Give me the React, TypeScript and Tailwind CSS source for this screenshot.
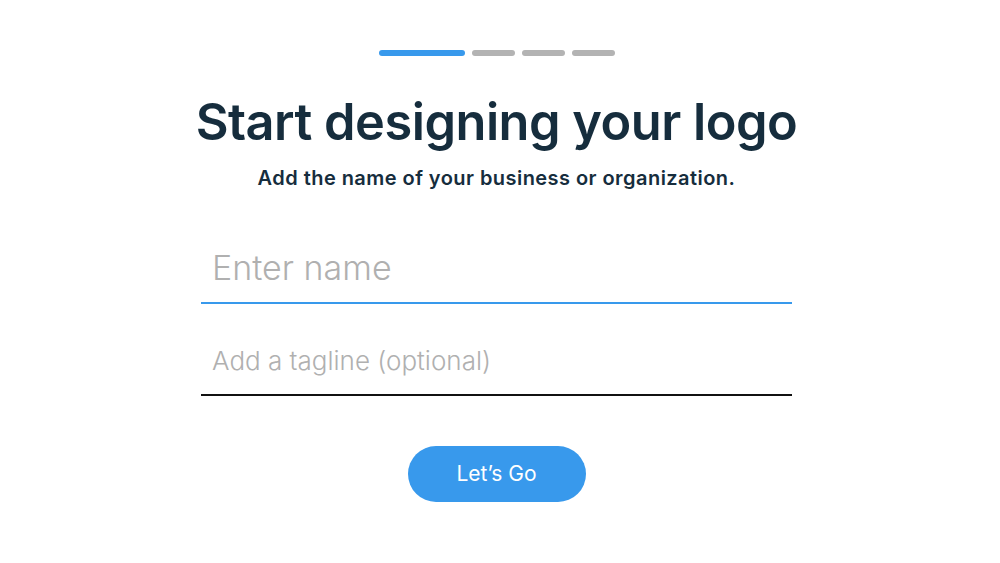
import { useState } from "react";

const STEPS = [true, false, false, false];

export default function App() {
  const [name, setName] = useState("");
  const [tagline, setTagline] = useState("");

  return (
    <div className="min-h-[563px] w-full bg-white flex flex-col items-center pr-[7px] font-['Inter',sans-serif]">
      {/* Step indicator */}
      <div className="mt-[50px] flex gap-[7px]">
        {STEPS.map((active, i) => (
          <div
            key={i}
            className={`h-[6px] rounded-full ${active ? "w-[86px] bg-[#3899ec]" : "w-[43px] bg-[#b3b3b3]"}`}
          />
        ))}
      </div>

      <h1 className="mt-[34px] text-[50.5px] leading-[64px] font-semibold tracking-[-0.5px] text-[#162d3d]">
        Start designing your logo
      </h1>
      <p className="mt-[12px] text-[20px] leading-[24px] font-semibold tracking-[0.45px] text-[#162d3d]">
        Add the name of your business or organization.
      </p>

      <div className="mt-[52px] w-[591px] flex flex-col">
        <input
          value={name}
          onChange={(e) => setName(e.target.value)}
          placeholder="Enter name"
          className="h-[62px] px-[11px] pb-[10px] text-[34px] font-light text-[#162d3d] placeholder:text-[#b0b0b0] outline-none border-b-2 border-[#3899ec] bg-transparent"
        />
        <input
          value={tagline}
          onChange={(e) => setTagline(e.target.value)}
          placeholder="Add a tagline (optional)"
          className="mt-[30px] h-[62px] px-[11px] pb-[8px] text-[26px] font-light text-[#162d3d] placeholder:text-[#b0b0b0] outline-none border-b-2 border-[#111111] bg-transparent"
        />
      </div>

      <button className="mt-[50px] w-[178px] h-[56px] rounded-full bg-[#3899ec] text-white text-[21px] font-normal">
        Let’s Go
      </button>
    </div>
  );
}
